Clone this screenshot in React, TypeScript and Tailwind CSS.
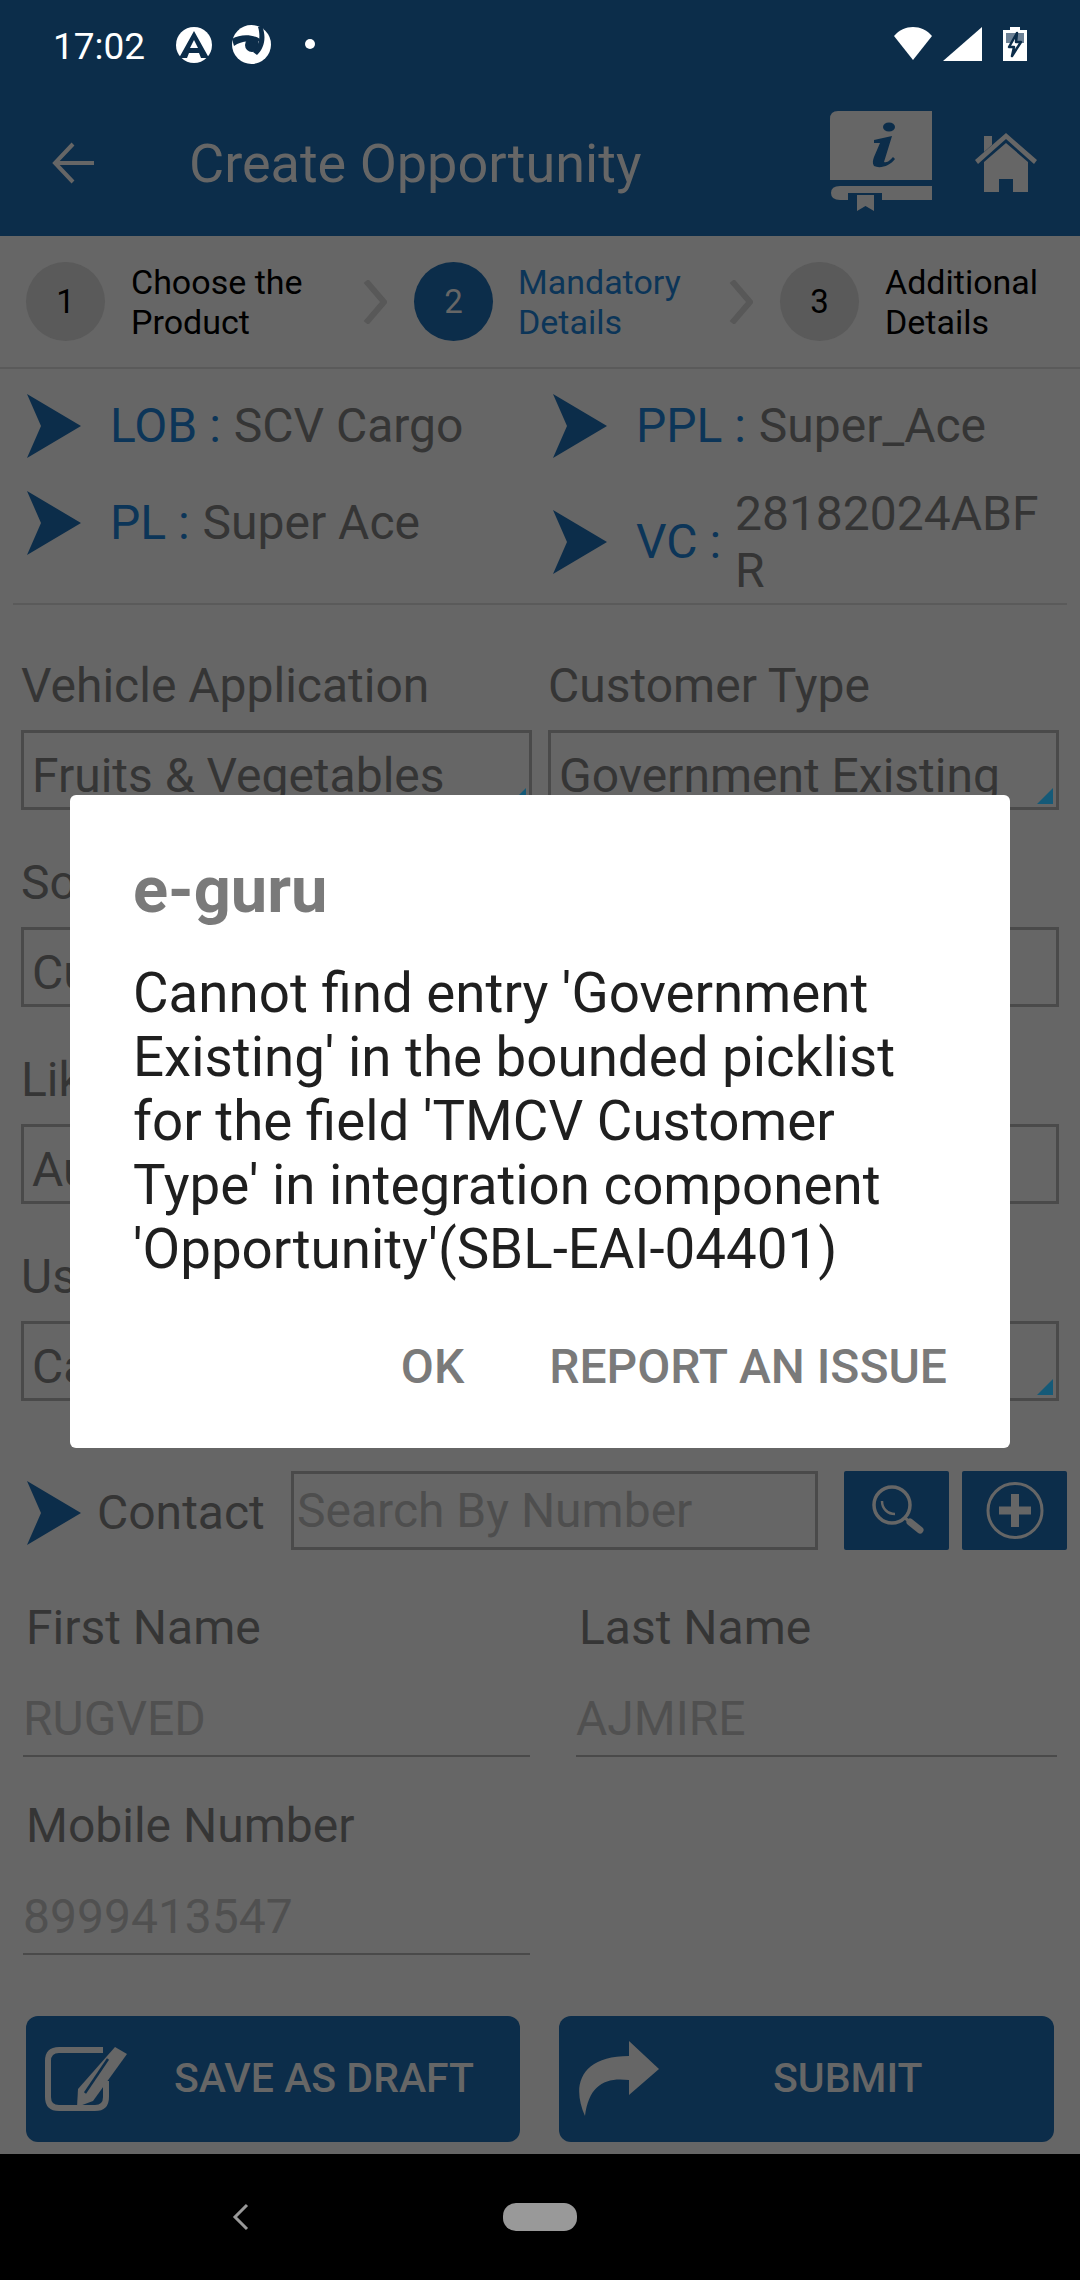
import React from "react";

const NAVY = "#0c2d4a";
const Arrow = () => (
  <svg width="56" height="64" viewBox="0 0 56 64" className="shrink-0">
    <path d="M0 0 L54 32 L0 64 L14 32 Z" fill={NAVY} />
  </svg>
);

function Step({ n, a, b, active, w }: { n: string; a: string; b: string; active?: boolean; w: string }) {
  return (
    <div className={`flex items-center shrink-0 ${w}`}>
      <div className={active ? "w-[79px] h-[79px] rounded-full bg-[#0c2d4a] text-[#666666] flex items-center justify-center text-[33px]" : "w-[79px] h-[79px] rounded-full bg-[#5a5a5a] text-black flex items-center justify-center text-[33px]"}>{n}</div>
      <div className={active ? "ml-[25px] text-[34px] leading-[40px] text-[#0c3558]" : "ml-[26px] text-[34px] leading-[40px] text-black"}>
        <div>{a}</div>
        <div>{b}</div>
      </div>
    </div>
  );
}

function Chevron() {
  return (
    <svg width="24" height="44" viewBox="0 0 24 44" className="shrink-0 mr-[27px]">
      <path d="M3 1 L21 22 L3 43" fill="none" stroke="#585858" strokeWidth="6" />
    </svg>
  );
}

function Info({ label, value, w }: { label: string; value: string; w: string }) {
  return (
    <div className={`flex items-center ${w}`}>
      <Arrow />
      <span className="ml-[27px] text-[48px] leading-[60px] text-[#0c3558] whitespace-pre">{label}</span>
      <span className="ml-[1px] text-[48px] leading-[60px] text-[#353535] whitespace-pre">{value}</span>
    </div>
  );
}

function Select({ label, value, arrow }: { label: string; value: string; arrow?: boolean }) {
  return (
    <div className="w-[511px]">
      <div className="text-[48px] leading-[54px] text-[#353535] h-[54px] whitespace-nowrap">{label}</div>
      <div className="relative mt-[17px] h-[80px] border-[3px] border-[#4a4a4a] overflow-hidden pl-[8px] text-[48px] leading-[85px] text-[#353535] whitespace-nowrap">
        {value}
        {arrow && <div className="absolute right-[3px] bottom-[3px] w-0 h-0 border-l-[16px] border-l-transparent border-b-[16px] border-b-[#155a78]" />}
      </div>
    </div>
  );
}

function Field({ label, value, w }: { label: string; value: string; w: string }) {
  return (
    <div className={w}>
      <div className="pl-[3px] text-[48px] leading-[54px] text-[#353535]">{label}</div>
      <div className="mt-[39px] h-[63px] border-b-[2px] border-[#4a4a4a] text-[48px] leading-[50px] text-[#505050]">{value}</div>
    </div>
  );
}

export default function App() {
  return (
    <div className="relative w-[1080px] h-[2280px] bg-[#666666] overflow-hidden" style={{ fontFamily: "Roboto, sans-serif" }}>
      {/* header */}
      <div className="h-[236px] bg-[#0c2d4a]">
        <div className="h-[84px] flex items-center pl-[53px] pr-[53px] text-white">
          <span className="w-[91px] text-[37px] leading-[40px] mt-[9px] whitespace-nowrap">17:02</span>
          <svg width="36" height="36" viewBox="0 0 36 36" className="ml-[32px] mt-[5px]">
            <circle cx="18" cy="18" r="18" fill="#fff" />
            <path d="M18 4 L3 31 L11 31 L13 26 L23 26 L25 31 L33 31 Z" fill={NAVY} />
            <path d="M18 13 L22 21 L14 21 Z" fill="#fff" />
          </svg>
          <svg width="39" height="39" viewBox="0 0 39 39" className="ml-[20px] mt-[5px]">
            <circle cx="19.5" cy="19.5" r="19.5" fill="#fff" />
            <circle cx="20" cy="20" r="7" fill={NAVY} />
            <path d="M0 14 C8 9 20 9 28 14 L25 19 C18 15 9 16 2 21 Z" fill={NAVY} />
            <path d="M30 1 C35 12 32 24 25 30 L21 27 C27 22 29 11 26 2 Z" fill={NAVY} />
          </svg>
          <div className="ml-[34px] mt-[4px] w-[10px] h-[10px] rounded-full bg-white" />
          <div className="flex-1" />
          <svg width="38" height="33" viewBox="0 0 38 33" className="mt-[3px]">
            <path d="M0 9 C10 -3 28 -3 38 9 L19 33 Z" fill="#fff" />
          </svg>
          <svg width="39" height="34" viewBox="0 0 39 34" className="ml-[11px] mt-[4px]">
            <path d="M39 0 V34 H0 Z" fill="#fff" />
          </svg>
          <svg width="24" height="34" viewBox="0 0 24 34" className="ml-[21px] mt-[4px]">
            <path d="M7 0 H17 V3 H24 V34 H0 V3 H7 Z" fill="#fff" />
            <rect x="3" y="6" width="18" height="10" fill="#6d8195" />
            <path d="M14 6 L6 20 H11 L9 29 L18 15 H13 Z" fill="#fff" stroke={NAVY} strokeWidth="2.5" strokeLinejoin="round" />
          </svg>
        </div>
        <div className="h-[152px] flex items-center">
          <svg width="42" height="42" viewBox="0 0 42 42" className="ml-[52px] mt-[6px]">
            <path d="M42 21 H4 M21 2 L3 21 L21 40" fill="none" stroke="#666666" strokeWidth="4" />
          </svg>
          <div className="ml-[95px] mt-[8px] text-[54px] leading-[60px] text-[#666666] whitespace-nowrap">Create Opportunity</div>
          <div className="flex-1" />
          <svg width="102" height="100" viewBox="0 0 102 100" className="mt-[2px]">
            <path d="M8 0 H102 V69 H0 V8 Q0 0 8 0 Z" fill="#666666" />
            <path d="M10 75 H102 V89 H52 V82 H18 V89 H10 Q1 89 1 82 Q1 75 10 75 Z" fill="#666666" />
            <path d="M27 84 H44 V100 L35.5 95 L27 100 Z" fill="#666666" />
            <ellipse cx="59" cy="16" rx="6" ry="4.5" fill={NAVY} />
            <path d="M44 29 L62 25 L54 51 C58 52 60 49 63 46 L65 48 C60 55 50 58 44 55 C42 52 43 49 44 46 L50 32 L44 32 Z" fill={NAVY} />
          </svg>
          <svg width="62" height="59" viewBox="0 0 62 59" className="ml-[43px] mr-[43px] mt-[5px]">
            <path d="M9 3 H17 V12 L9 19 Z" fill="#666666" />
            <path d="M0 27 L31 0 L62 27 L59 31 L31 6 L3 31 Z" fill="#666666" />
            <path d="M9 29 L31 10 L53 29 V59 H38 V46 H24 V59 H9 Z" fill="#666666" />
          </svg>
        </div>
      </div>

      {/* steps */}
      <div className="h-[133px] border-b-[2px] border-[#5a5a5a] pl-[26px] flex items-center">
        <Step n="1" a="Choose the" b="Product" w="w-[337px]" />
        <Chevron />
        <Step n="2" a="Mandatory" b="Details" active w="w-[315px]" />
        <Chevron />
        <Step n="3" a="Additional" b="Details" w="" />
      </div>

      {/* summary */}
      <div className="mx-[13px] h-[236px] border-b-[2px] border-[#5a5a5a]">
        <div className="flex pl-[14px] pt-[25px]">
          <Info label="LOB : " value="SCV Cargo" w="w-[526px]" />
          <Info label="PPL : " value="Super_Ace" w="w-[500px]" />
        </div>
        <div className="flex items-start pl-[14px] pt-[33px]">
          <Info label="PL : " value="Super Ace" w="w-[526px]" />
          <div className="flex items-center -mt-[6px]">
            <Arrow />
            <span className="ml-[27px] text-[48px] leading-[60px] text-[#0c3558] whitespace-pre">VC : </span>
            <span className="ml-[2px] w-[320px] text-[48px] leading-[57px] text-[#353535] break-all">28182024ABFR</span>
          </div>
        </div>
      </div>

      {/* form */}
      <div className="pt-[54px] pl-[21px]">
        <div className="flex gap-[16px]">
          <Select label="Vehicle Application" value="Fruits & Vegetables" arrow />
          <Select label="Customer Type" value="Government Existing" arrow />
        </div>
        <div className="flex gap-[16px] mt-[46px]">
          <Select label="So" value="Cu" />
          <Select label="" value="" />
        </div>
        <div className="flex gap-[16px] mt-[46px]">
          <Select label="Lik" value="Au" />
          <Select label="" value="" />
        </div>
        <div className="flex gap-[16px] mt-[46px]">
          <Select label="Us" value="Ca" />
          <Select label="" value="" arrow />
        </div>
      </div>

      {/* contact */}
      <div className="flex items-center pl-[27px] mt-[70px] h-[79px]">
        <div className="mt-[5px]"><Arrow /></div>
        <span className="ml-[14px] w-[194px] text-[48px] leading-[60px] mt-[4px] text-[#353535]">Contact</span>
        <div className="w-[527px] h-[79px] border-[3px] border-[#4a4a4a] pl-[3px] text-[48px] leading-[73px] text-[#4e4e4e]">Search By Number</div>
        <div className="ml-[26px] w-[105px] h-[79px] rounded-[2px] bg-[#0c2d4a]">
          <svg width="105" height="79" viewBox="0 0 105 79">
            <circle cx="48" cy="34" r="18" fill="none" stroke="#666666" strokeWidth="3.5" />
            <path d="M38 30 C38 38 44 43 51 43" fill="none" stroke="#666666" strokeWidth="2.5" />
            <path d="M61 47 L66 51" stroke="#666666" strokeWidth="3" />
            <path d="M66 51 L76 59" stroke="#666666" strokeWidth="7" strokeLinecap="round" />
          </svg>
        </div>
        <div className="ml-[13px] w-[105px] h-[79px] rounded-[2px] bg-[#0c2d4a]">
          <svg width="105" height="79" viewBox="0 0 105 79">
            <circle cx="53" cy="39.5" r="27" fill="none" stroke="#666666" strokeWidth="3" />
            <path d="M53 23 V56 M37 39.5 H69" stroke="#666666" strokeWidth="8" />
          </svg>
        </div>
      </div>

      <div className="flex pl-[23px] mt-[51px]">
        <Field label="First Name" value="RUGVED" w="w-[507px]" />
        <Field label="Last Name" value="AJMIRE" w="w-[481px] ml-[46px]" />
      </div>
      <div className="flex pl-[23px] mt-[42px]">
        <Field label="Mobile Number" value="8999413547" w="w-[507px]" />
      </div>

      {/* bottom buttons */}
      <div className="absolute left-[26px] top-[2016px] flex gap-[39px]">
        <div className="relative w-[494px] h-[126px] rounded-[12px] bg-[#0c2d4a]">
          <svg width="82" height="64" viewBox="0 0 82 64" className="absolute left-[19px] top-[31px]">
            <path d="M58 3 H14 Q3 3 3 14 V50 Q3 61 14 61 H50 Q61 61 61 50 V34" fill="none" stroke="#666666" strokeWidth="6" />
            <path d="M70 0 L82 7 L48 54 L32 60 L33 42 Z" fill="#666666" />
            <path d="M63 12 L40 46" stroke={NAVY} strokeWidth="2.5" />
          </svg>
          <div className="absolute left-[148px] top-0 h-[126px] flex items-center text-[41px] font-medium text-[#666666] whitespace-nowrap">SAVE AS DRAFT</div>
        </div>
        <div className="relative w-[495px] h-[126px] rounded-[12px] bg-[#0c2d4a]">
          <svg width="84" height="75" viewBox="0 0 84 75" className="absolute left-[16px] top-[25px]">
            <path d="M54 0 L84 28 L54 54 V39 C30 36 14 44 10 75 C-4 44 6 15 54 15 Z" fill="#666666" />
          </svg>
          <div className="absolute left-[214px] top-0 h-[126px] flex items-center text-[41px] font-medium text-[#666666]">SUBMIT</div>
        </div>
      </div>

      {/* nav */}
      <div className="absolute left-0 right-0 top-[2154px] h-[126px] bg-black">
        <svg width="20" height="28" viewBox="0 0 20 28" className="absolute left-[231px] top-[49px]">
          <path d="M16 2 L4 14 L16 26" fill="none" stroke="#999999" strokeWidth="3" />
        </svg>
        <div className="absolute left-[503px] top-[49px] w-[74px] h-[28px] rounded-[13px] bg-[#999999]" />
      </div>

      {/* dialog */}
      <div className="absolute left-[70px] top-[795px] w-[940px] h-[653px] bg-white rounded-[6px] pl-[63px] pr-[50px]">
        <div className="pt-[60px] text-[65px] leading-[70px] font-bold text-[#7a7a7a]">e-guru</div>
        <div className="mt-[36px] text-[54.7px] leading-[64px] text-[#1f1f1f]">
          Cannot find entry 'Government Existing' in the bounded picklist for the field 'TMCV Customer Type' in integration component 'Opportunity'(SBL-EAI-04401)
        </div>
        <div className="absolute right-[63px] top-[546px] flex gap-[85px] text-[48px] leading-[52px] font-medium text-[#7a7a7a]">
          <span>OK</span>
          <span>REPORT AN ISSUE</span>
        </div>
      </div>
    </div>
  );
}
